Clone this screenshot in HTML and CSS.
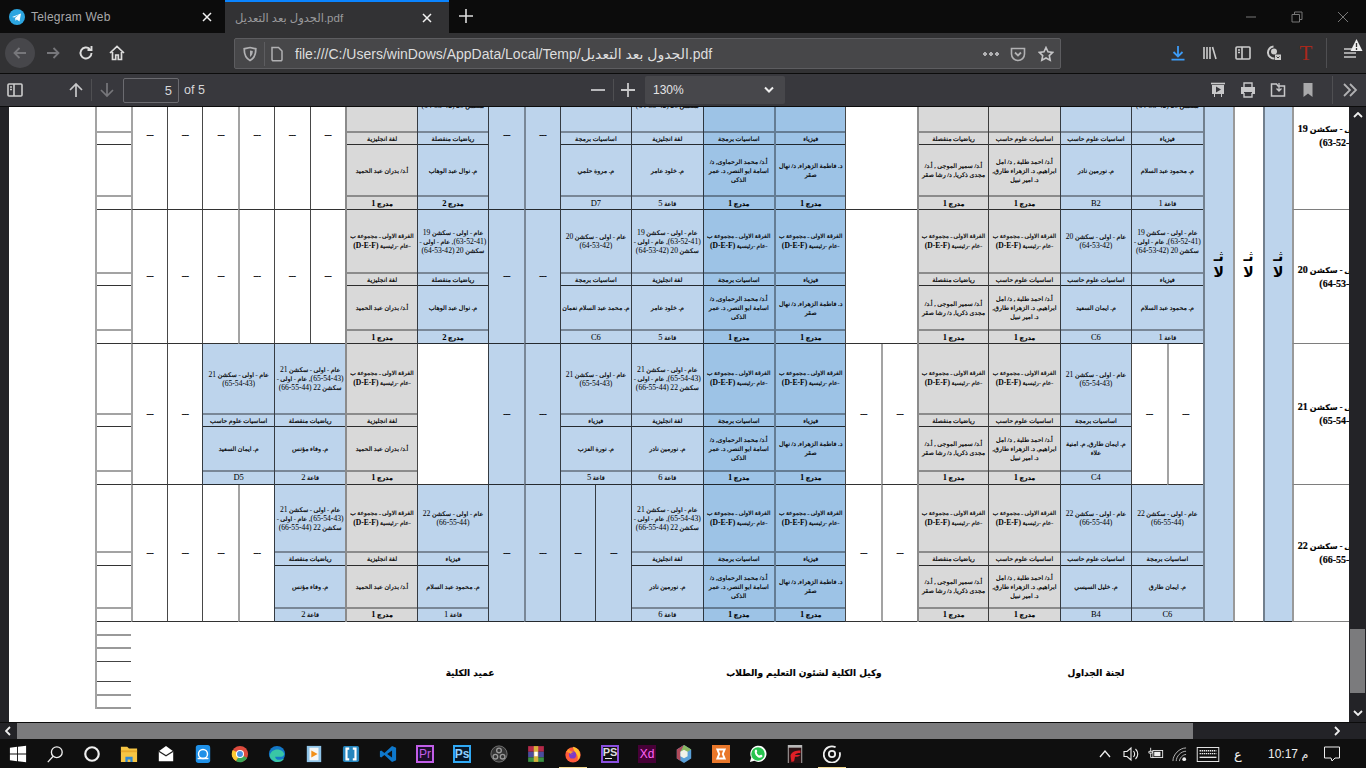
FILE: index.html
```html
<!DOCTYPE html>
<html lang="ar">
<head>
<meta charset="utf-8">
<title>Telegram Web</title>
<link rel="stylesheet" href="styles.css">
</head>
<body>
<svg class="defs" width="0" height="0" aria-hidden="true">
  <symbol id="x" viewBox="0 0 12 12"><path d="M2 2l8 8M10 2l-8 8" fill="none" stroke="currentColor" stroke-width="1.5"/></symbol>
  <symbol id="bar" viewBox="0 0 18 18"><path d="M3 3h12a1 1 0 0 1 1 1v10a1 1 0 0 1-1 1H3a1 1 0 0 1-1-1V4a1 1 0 0 1 1-1zM8 3v12M4 6h2M4 8.500h2" fill="none" stroke="currentColor" stroke-width="1.600"/></symbol>
</svg>

<header class="tabs">
  <div class="tab">
    <svg class="ticon" viewBox="0 0 16 16"><circle cx="8" cy="8" r="8" fill="#2ca5e0"/><path d="M3 8l9-3.600-1.500 8-2.700-2-1.300 1.300-.4-2.700 4-3.500-5 3z" fill="#fff"/></svg>
    <span class="tname">Telegram Web</span>
    <svg class="tx"><use href="#x"/></svg>
  </div>
  <div class="tab on">
    <span class="tname">الجدول بعد التعديل.pdf</span>
    <svg class="tx"><use href="#x"/></svg>
  </div>
  <svg class="plus" viewBox="0 0 14 14"><path d="M7 0v14M0 7h14" stroke="#ddd" stroke-width="1.600"/></svg>
  <div class="winbtns">
    <svg viewBox="0 0 12 12"><path d="M1 6h10" stroke="#777" stroke-width="1"/></svg>
    <svg viewBox="0 0 12 12"><path d="M3.500 3V1h7.500v7.500H8.500M1 3.500h7.500V11H1z" fill="none" stroke="#777"/></svg>
    <svg viewBox="0 0 12 12"><path d="M1 1l10 10M11 1L1 11" stroke="#777"/></svg>
  </div>
</header>

<nav class="bar">
  <div class="round"><svg viewBox="0 0 16 16"><path d="M14 8H2.500M7.500 3l-5 5 5 5" fill="none" stroke="#77777b" stroke-width="1.800"/></svg></div>
  <svg class="nv fwd" viewBox="0 0 16 16"><path d="M2 8h11.500M8.500 3l5 5-5 5" fill="none" stroke="#77777b" stroke-width="1.800"/></svg>
  <svg class="nv" viewBox="0 0 16 16"><path d="M13.500 8a5.500 5.500 0 1 1-1.700-4M13.500 1v4h-4" fill="none" stroke="#ddd" stroke-width="1.900"/></svg>
  <svg class="nv" viewBox="0 0 16 16"><path d="M1 8l7-6.500L15 8M3.500 7v7.500h3.200V10h2.600v4.500h3.200V7" fill="none" stroke="#ddd" stroke-width="1.700"/></svg>
  <div class="url">
    <svg class="ui shield" viewBox="0 0 16 16"><path d="M8 1.500l5.800 1.300c0 6-1.800 9.700-5.800 11.700C4 12.500 2.200 8.800 2.200 2.800z" fill="none" stroke="#b1b1b3" stroke-width="1.700"/><path d="M8 4.500l2.800.6c0 2.700-.9 4.600-2.800 5.800z" fill="#b1b1b3"/></svg>
    <span class="sep s4"></span>
    <svg class="ui file" viewBox="0 0 16 16"><path d="M3 1.500h6.500l3.500 3.500v8.500a1.200 1.200 0 0 1-1.200 1.200H4.200A1.200 1.200 0 0 1 3 13.500z" fill="none" stroke="#b1b1b3" stroke-width="1.500"/></svg>
    <span class="addr">file:///C:/Users/winDows/AppData/Local/Temp/الجدول بعد التعديل.pdf</span>
    <span class="dots"></span>
    <svg class="ui" viewBox="0 0 16 16"><path d="M1.500 2.500h13v5.500a6.500 6.500 0 0 1-13 0z" fill="none" stroke="#b1b1b3" stroke-width="1.600"/><path d="M5 6.500l3 3 3-3" fill="none" stroke="#b1b1b3" stroke-width="1.800"/></svg>
    <svg class="ui star" viewBox="0 0 16 16"><path d="M8 1.500l2 4.300 4.700.6-3.400 3.200.9 4.700L8 12l-4.200 2.300.9-4.700L1.300 6.400l4.700-.6z" fill="none" stroke="#c4c4c6" stroke-width="1.600"/></svg>
  </div>
  <div class="tools">
    <svg viewBox="0 0 16 16"><path d="M8 1v10M3.500 7L8 11.500 12.500 7M1.500 14.700h13" fill="none" stroke="#3d9bf5" stroke-width="1.800"/></svg>
    <svg viewBox="0 0 16 16"><path d="M2 2v12M5 2v12M8 2v12M10.500 2l3.500 12" fill="none" stroke="#ccc" stroke-width="1.600"/></svg>
    <svg class="sb"><use href="#bar"/></svg>
    <svg viewBox="0 0 16 16"><path d="M7.500 1.500a6 6 0 1 0 1 12" fill="none" stroke="#ccc" stroke-width="2"/><circle cx="8" cy="6.500" r="3" fill="#ccc"/><rect x="9" y="9.500" width="6" height="5.500" fill="#ccc"/><path d="M10.500 11.500l1.500 1.500 1.500-1.500" fill="none" stroke="#333" stroke-width="1"/></svg>
    <span class="redt">T</span>
    <span class="sep"></span>
    <span class="burger"><svg viewBox="0 0 14 12"><path d="M1 2h12M1 6h12M1 10h12" stroke="#ccc" stroke-width="1.500"/></svg><svg class="warn" viewBox="0 0 12 12"><path d="M6 0l6 12H0z" fill="#eee"/><path d="M6 4v4M6 9v2" stroke="#333" stroke-width="1.300"/></svg></span>
  </div>
</nav>

<div class="pdfbar">
  <svg class="pi sb"><use href="#bar"/></svg>
  <svg class="pi up" viewBox="0 0 16 16"><path d="M8 15V2M2 8l6-6 6 6" fill="none" stroke="#c8c8ca" stroke-width="1.700"/></svg>
  <span class="sep s1"></span>
  <svg class="pi down" viewBox="0 0 16 16"><path d="M8 1v13M2 8l6 6 6-6" fill="none" stroke="#77777b" stroke-width="1.700"/></svg>
  <span class="page">5</span>
  <span class="ofn">of 5</span>
  <div class="zoom">
    <svg class="pi" viewBox="0 0 16 16"><path d="M1 8h14" stroke="#c8c8ca" stroke-width="1.800"/></svg>
    <span class="sep s2"></span>
    <svg class="pi" viewBox="0 0 16 16"><path d="M1 8h14M8 1v14" stroke="#c8c8ca" stroke-width="1.800"/></svg>
    <div class="select"><span>130%</span><svg viewBox="0 0 10 8"><path d="M1 1.500l4 4 4-4" fill="none" stroke="#eee" stroke-width="2"/></svg></div>
  </div>
  <div class="pright">
    <svg viewBox="0 0 16 16"><path d="M1 1.500h14" stroke="#c8c8ca" stroke-width="1.600"/><path d="M2 3h12v9H2z" fill="#c8c8ca"/><path d="M6 4.500l5 3-5 3z" fill="#38383d"/><path d="M4.500 12v3M11.500 12v3" stroke="#c8c8ca"/></svg>
    <svg viewBox="0 0 16 16"><path d="M4 5V1h8v4M4 11v4h8v-4" fill="none" stroke="#c8c8ca" stroke-width="1.400"/><path d="M1 5h14v7h-3v-2H4v2H1z" fill="#c8c8ca"/></svg>
    <svg viewBox="0 0 16 16"><path d="M1.500 2h5l1.500 2h6.500v10h-13z" fill="none" stroke="#c8c8ca" stroke-width="1.500"/><path d="M9 1v8M6.500 6.500L9 9l2.500-2.500" fill="none" stroke="#c8c8ca" stroke-width="1.300"/></svg>
    <svg viewBox="0 0 16 16"><path d="M3.500 1h9v14L8 11.500 3.500 15z" fill="#a9a9ab"/></svg>
    <span class="sep s3"></span>
    <svg viewBox="0 0 16 16"><path d="M2 2l6 6-6 6M8 2l6 6-6 6" fill="none" stroke="#b1b1b3" stroke-width="1.800"/></svg>
  </div>
</div>

<main class="viewer">
  <div class="gutter"></div>
  <div class="paper">
    <div class="sheet">

      <section class="session r1">
        <div class="slot edge hv"><i></i><i></i><i></i><i></i></div>
        <div class="dash hv">---</div><div class="dash">---</div><div class="dash">---</div><div class="dash hv">---</div><div class="dash">---</div><div class="dash">---</div>
        <div class="slot gray hv"><p>الفرقة الاولى ـ مجموعة ب<br><b>-عام -رئيسية <em>(D-E-F)</em></b></p><p>لغة انجليزية</p><p>أ.د/ بدران عبد الحميد</p><p class="hall">مدرج <em>1</em></p></div>
        <div class="slot blue"><p>عام - اولى - سكشن <em>19</em> <em>(41-52-63),</em> عام - اولى - سكشن <em>20</em> <em>(42-53-64)</em></p><p>رياضيات منفصلة</p><p>م. نوال عبد الوهاب</p><p class="hall">مدرج <em>2</em></p></div>
        <div class="dash blue">---</div><div class="dash blue hv">---</div>
        <div class="slot blue"><p>عام - اولى - سكشن <em>20</em> <em>(42-53-64)</em></p><p>اساسيات برمجة</p><p>م. مروة حلمي</p><p class="room"><em>D7</em></p></div>
        <div class="slot blue"><p>عام - اولى - سكشن <em>19</em> <em>(41-52-63),</em> عام - اولى - سكشن <em>20</em> <em>(42-53-64)</em></p><p>لغة انجليزية</p><p>م. خلود عامر</p><p class="room">قاعة <em>5</em></p></div>
        <div class="slot deep"><p>الفرقة الاولى ـ مجموعة ب<br><b>-عام -رئيسية <em>(D-E-F)</em></b></p><p>اساسيات برمجة</p><p>أ.د/ محمد الرحماوى, د/ اسامة ابو النصر, د. عمر الذكى</p><p class="hall">مدرج <em>1</em></p></div>
        <div class="slot deep hv"><p>الفرقة الاولى ـ مجموعة ب<br><b>-عام -رئيسية <em>(D-E-F)</em></b></p><p>فيزياء</p><p>د. فاطمة الزهراء, د/ نهال صقر</p><p class="hall">مدرج <em>1</em></p></div>
        <div class="blank"></div>
        <div class="slot gray hv"><p>الفرقة الاولى ـ مجموعة ب<br><b>-عام -رئيسية <em>(D-E-F)</em></b></p><p>رياضيات منفصلة</p><p>أ.د/ سمير الموجى , أ.د/ مجدى ذكريا, د/ رشا صقر</p><p class="hall">مدرج <em>1</em></p></div>
        <div class="slot gray"><p>الفرقة الاولى ـ مجموعة ب<br><b>-عام -رئيسية <em>(D-E-F)</em></b></p><p>اساسيات علوم حاسب</p><p>أ.د/ احمد طلبة , د/ امل ابراهيم, د. الزهراء طارق, د. امير نبيل</p><p class="hall">مدرج <em>1</em></p></div>
        <div class="slot blue"><p>عام - اولى - سكشن <em>20</em> <em>(42-53-64)</em></p><p>اساسيات علوم حاسب</p><p>م. نورمين نادر</p><p class="room"><em>B2</em></p></div>
        <div class="slot blue"><p>عام - اولى - سكشن <em>19</em> <em>(41-52-63),</em> عام - اولى - سكشن <em>20</em> <em>(42-53-64)</em></p><p>فيزياء</p><p>م. محمود عبد السلام</p><p class="room">قاعة <em>1</em></p></div>
      </section>
      <div class="band b1 tint"><span>ثـ<br>لا</span></div>
      <div class="band b2"><span>ثـ<br>لا</span></div>
      <div class="band b3 tint"><span>ثـ<br>لا</span></div>
      <div class="rowhead r1" dir="rtl"><p>عام - اولى - سكشن <em>19</em> <em>(41-52-63)</em></p></div>

      <section class="session r2">
        <div class="slot edge hv"><i></i><i></i><i></i><i></i></div>
        <div class="dash hv">---</div><div class="dash">---</div><div class="dash">---</div><div class="dash hv">---</div><div class="dash">---</div><div class="dash">---</div>
        <div class="slot gray hv"><p>الفرقة الاولى ـ مجموعة ب<br><b>-عام -رئيسية <em>(D-E-F)</em></b></p><p>لغة انجليزية</p><p>أ.د/ بدران عبد الحميد</p><p class="hall">مدرج <em>1</em></p></div>
        <div class="slot blue"><p>عام - اولى - سكشن <em>19</em> <em>(41-52-63),</em> عام - اولى - سكشن <em>20</em> <em>(42-53-64)</em></p><p>رياضيات منفصلة</p><p>م. نوال عبد الوهاب</p><p class="hall">مدرج <em>2</em></p></div>
        <div class="dash blue">---</div><div class="dash blue hv">---</div>
        <div class="slot blue"><p>عام - اولى - سكشن <em>20</em> <em>(42-53-64)</em></p><p>اساسيات برمجة</p><p>م. محمد عبد السلام نعمان</p><p class="room"><em>C6</em></p></div>
        <div class="slot blue"><p>عام - اولى - سكشن <em>19</em> <em>(41-52-63),</em> عام - اولى - سكشن <em>20</em> <em>(42-53-64)</em></p><p>لغة انجليزية</p><p>م. خلود عامر</p><p class="room">قاعة <em>5</em></p></div>
        <div class="slot deep"><p>الفرقة الاولى ـ مجموعة ب<br><b>-عام -رئيسية <em>(D-E-F)</em></b></p><p>اساسيات برمجة</p><p>أ.د/ محمد الرحماوى, د/ اسامة ابو النصر, د. عمر الذكى</p><p class="hall">مدرج <em>1</em></p></div>
        <div class="slot deep hv"><p>الفرقة الاولى ـ مجموعة ب<br><b>-عام -رئيسية <em>(D-E-F)</em></b></p><p>فيزياء</p><p>د. فاطمة الزهراء, د/ نهال صقر</p><p class="hall">مدرج <em>1</em></p></div>
        <div class="blank"></div>
        <div class="slot gray hv"><p>الفرقة الاولى ـ مجموعة ب<br><b>-عام -رئيسية <em>(D-E-F)</em></b></p><p>رياضيات منفصلة</p><p>أ.د/ سمير الموجى , أ.د/ مجدى ذكريا, د/ رشا صقر</p><p class="hall">مدرج <em>1</em></p></div>
        <div class="slot gray"><p>الفرقة الاولى ـ مجموعة ب<br><b>-عام -رئيسية <em>(D-E-F)</em></b></p><p>اساسيات علوم حاسب</p><p>أ.د/ احمد طلبة , د/ امل ابراهيم, د. الزهراء طارق, د. امير نبيل</p><p class="hall">مدرج <em>1</em></p></div>
        <div class="slot blue"><p>عام - اولى - سكشن <em>20</em> <em>(42-53-64)</em></p><p>اساسيات علوم حاسب</p><p>م. ايمان السعيد</p><p class="room"><em>C6</em></p></div>
        <div class="slot blue"><p>عام - اولى - سكشن <em>19</em> <em>(41-52-63),</em> عام - اولى - سكشن <em>20</em> <em>(42-53-64)</em></p><p>فيزياء</p><p>م. محمود عبد السلام</p><p class="room">قاعة <em>1</em></p></div>
      </section>
      <div class="rowhead r2" dir="rtl"><p>عام - اولى - سكشن <em>20</em> <em>(42-53-64)</em></p></div>

      <section class="session r3">
        <div class="slot edge hv"><i></i><i></i><i></i><i></i></div>
        <div class="dash hv">---</div><div class="dash">---</div>
        <div class="slot blue"><p>عام - اولى - سكشن <em>21</em> <em>(43-54-65)</em></p><p>اساسيات علوم حاسب</p><p>م. ايمان السعيد</p><p class="room"><em>D5</em></p></div>
        <div class="slot blue"><p>عام - اولى - سكشن <em>21</em> <em>(43-54-65),</em> عام - اولى - سكشن <em>22</em> <em>(44-55-66)</em></p><p>رياضيات منفصلة</p><p>م. وفاء مؤنس</p><p class="room">قاعة <em>2</em></p></div>
        <div class="slot gray hv"><p>الفرقة الاولى ـ مجموعة ب<br><b>-عام -رئيسية <em>(D-E-F)</em></b></p><p>لغة انجليزية</p><p>أ.د/ بدران عبد الحميد</p><p class="hall">مدرج <em>1</em></p></div>
        <div class="blank"></div>
        <div class="dash blue">---</div><div class="dash blue hv">---</div>
        <div class="slot blue"><p>عام - اولى - سكشن <em>21</em> <em>(43-54-65)</em></p><p>فيزياء</p><p>م. نورة العزب</p><p class="room">قاعة <em>5</em></p></div>
        <div class="slot blue"><p>عام - اولى - سكشن <em>21</em> <em>(43-54-65),</em> عام - اولى - سكشن <em>22</em> <em>(44-55-66)</em></p><p>لغة انجليزية</p><p>م. نورمين نادر</p><p class="room">قاعة <em>6</em></p></div>
        <div class="slot deep"><p>الفرقة الاولى ـ مجموعة ب<br><b>-عام -رئيسية <em>(D-E-F)</em></b></p><p>اساسيات برمجة</p><p>أ.د/ محمد الرحماوى, د/ اسامة ابو النصر, د. عمر الذكى</p><p class="hall">مدرج <em>1</em></p></div>
        <div class="slot deep hv"><p>الفرقة الاولى ـ مجموعة ب<br><b>-عام -رئيسية <em>(D-E-F)</em></b></p><p>فيزياء</p><p>د. فاطمة الزهراء, د/ نهال صقر</p><p class="hall">مدرج <em>1</em></p></div>
        <div class="dash">---</div><div class="dash hv">---</div>
        <div class="slot gray hv"><p>الفرقة الاولى ـ مجموعة ب<br><b>-عام -رئيسية <em>(D-E-F)</em></b></p><p>رياضيات منفصلة</p><p>أ.د/ سمير الموجى , أ.د/ مجدى ذكريا, د/ رشا صقر</p><p class="hall">مدرج <em>1</em></p></div>
        <div class="slot gray"><p>الفرقة الاولى ـ مجموعة ب<br><b>-عام -رئيسية <em>(D-E-F)</em></b></p><p>اساسيات علوم حاسب</p><p>أ.د/ احمد طلبة , د/ امل ابراهيم, د. الزهراء طارق, د. امير نبيل</p><p class="hall">مدرج <em>1</em></p></div>
        <div class="slot blue"><p>عام - اولى - سكشن <em>21</em> <em>(43-54-65)</em></p><p>اساسيات برمجة</p><p>م. ايمان طارق, م. امنية علاء</p><p class="room"><em>C4</em></p></div>
        <div class="dash">---</div><div class="dash hv">---</div>
      </section>
      <div class="rowhead r3" dir="rtl"><p>عام - اولى - سكشن <em>21</em> <em>(43-54-65)</em></p></div>

      <section class="session r4">
        <div class="slot edge hv"><i></i><i></i><i></i><i></i></div>
        <div class="dash hv">---</div><div class="dash">---</div><div class="dash">---</div><div class="dash hv">---</div>
        <div class="slot blue"><p>عام - اولى - سكشن <em>21</em> <em>(43-54-65),</em> عام - اولى - سكشن <em>22</em> <em>(44-55-66)</em></p><p>رياضيات منفصلة</p><p>م. وفاء مؤنس</p><p class="room">قاعة <em>2</em></p></div>
        <div class="slot gray hv"><p>الفرقة الاولى ـ مجموعة ب<br><b>-عام -رئيسية <em>(D-E-F)</em></b></p><p>لغة انجليزية</p><p>أ.د/ بدران عبد الحميد</p><p class="hall">مدرج <em>1</em></p></div>
        <div class="slot blue"><p>عام - اولى - سكشن <em>22</em> <em>(44-55-66)</em></p><p>فيزياء</p><p>م. محمود عبد السلام</p><p class="room">قاعة <em>1</em></p></div>
        <div class="dash blue">---</div><div class="dash blue hv">---</div><div class="dash blue">---</div><div class="dash blue">---</div>
        <div class="slot blue"><p>عام - اولى - سكشن <em>21</em> <em>(43-54-65),</em> عام - اولى - سكشن <em>22</em> <em>(44-55-66)</em></p><p>لغة انجليزية</p><p>م. نورمين نادر</p><p class="room">قاعة <em>6</em></p></div>
        <div class="slot deep"><p>الفرقة الاولى ـ مجموعة ب<br><b>-عام -رئيسية <em>(D-E-F)</em></b></p><p>اساسيات برمجة</p><p>أ.د/ محمد الرحماوى, د/ اسامة ابو النصر, د. عمر الذكى</p><p class="hall">مدرج <em>1</em></p></div>
        <div class="slot deep hv"><p>الفرقة الاولى ـ مجموعة ب<br><b>-عام -رئيسية <em>(D-E-F)</em></b></p><p>فيزياء</p><p>د. فاطمة الزهراء, د/ نهال صقر</p><p class="hall">مدرج <em>1</em></p></div>
        <div class="dash">---</div><div class="dash hv">---</div>
        <div class="slot gray hv"><p>الفرقة الاولى ـ مجموعة ب<br><b>-عام -رئيسية <em>(D-E-F)</em></b></p><p>رياضيات منفصلة</p><p>أ.د/ سمير الموجى , أ.د/ مجدى ذكريا, د/ رشا صقر</p><p class="hall">مدرج <em>1</em></p></div>
        <div class="slot gray"><p>الفرقة الاولى ـ مجموعة ب<br><b>-عام -رئيسية <em>(D-E-F)</em></b></p><p>اساسيات علوم حاسب</p><p>أ.د/ احمد طلبة , د/ امل ابراهيم, د. الزهراء طارق, د. امير نبيل</p><p class="hall">مدرج <em>1</em></p></div>
        <div class="slot blue"><p>عام - اولى - سكشن <em>22</em> <em>(44-55-66)</em></p><p>اساسيات علوم حاسب</p><p>م. خليل السيسي</p><p class="room"><em>B4</em></p></div>
        <div class="slot blue"><p>عام - اولى - سكشن <em>22</em> <em>(44-55-66)</em></p><p>اساسيات برمجة</p><p>م. ايمان طارق</p><p class="room"><em>C6</em></p></div>
      </section>
      <div class="rowhead r4" dir="rtl"><p>عام - اولى - سكشن <em>22</em> <em>(44-55-66)</em></p></div>
    </div>

    <footer class="signs">
      <div class="ticks"><i></i><i></i><i></i><i></i><i></i><i></i></div>
      <b class="sig dean" dir="rtl">عميد الكلية</b>
      <b class="sig vice" dir="rtl">وكيل الكلية لشئون التعليم والطلاب</b>
      <b class="sig cttee" dir="rtl">لجنة الجداول</b>
    </footer>
  </div>
  <aside class="vscroll">
    <svg viewBox="0 0 10 6"><path d="M1 5l4-4 4 4" fill="none" stroke="#eee" stroke-width="1.800"/></svg>
    <span class="vthumb"></span>
    <svg viewBox="0 0 10 6"><path d="M1 1l4 4 4-4" fill="none" stroke="#eee" stroke-width="1.800"/></svg>
  </aside>
</main>

<div class="hscroll">
  <svg viewBox="0 0 6 10"><path d="M5 1L1 5l4 4" fill="none" stroke="#eee" stroke-width="1.800"/></svg>
  <span class="hthumb"></span>
  <svg viewBox="0 0 6 10"><path d="M1 1l4 4-4 4" fill="none" stroke="#eee" stroke-width="1.800"/></svg>
</div>

<footer class="task">
  <svg class="ic" viewBox="0 0 20 20"><path d="M1 3l8-1v7.500H1zM10 2l9-1.300v8.800h-9zM1 10.500h8V18l-8-1zM10 10.500h9v8.800L10 18z" fill="#fff"/></svg>
  <svg class="ic" viewBox="0 0 20 20"><circle cx="12" cy="8" r="6" fill="none" stroke="#eee" stroke-width="1.500"/><path d="M8 12.500L2 19" stroke="#eee" stroke-width="1.500"/></svg>
  <svg class="ic" viewBox="0 0 20 20"><circle cx="10" cy="10" r="7.500" fill="none" stroke="#eee" stroke-width="2.400"/></svg>
  <svg class="ic" viewBox="0 0 20 20"><path d="M1 2h7l2 2h9v15H1z" fill="#f6c544"/><path d="M1 6h18v2H1z" fill="#e8a92c"/><path d="M6 19v-6h8v6h-2.500v-3h-3v3z" fill="#2d89d6"/></svg>
  <svg class="ic" viewBox="0 0 20 20"><path d="M2 7l8-6 8 6v11H2z" fill="#fff"/><path d="M2 7l8 5 8-5" fill="none" stroke="#222" stroke-width="1.500"/></svg>
  <svg class="ic" viewBox="0 0 20 20"><rect x="2" y="0" width="16" height="20" rx="3" fill="#1e90e8"/><circle cx="10" cy="10" r="5" fill="none" stroke="#fff" stroke-width="1.600"/><path d="M4 15h12" stroke="#fff" stroke-width="1.600"/></svg>
  <svg class="ic" viewBox="0 0 20 20"><circle cx="10" cy="10" r="9" fill="#dd4b3e"/><path d="M10 10L18 14.500A9 9 0 0 1 5.500 17.800z" fill="#3aa757"/><path d="M10 10L5.500 17.800A9 9 0 0 1 2 5.500z" fill="#fcc934"/><circle cx="10" cy="10" r="4.500" fill="#fff"/><circle cx="10" cy="10" r="3.300" fill="#4a90e2"/></svg>
  <svg class="ic" viewBox="0 0 20 20"><circle cx="10" cy="10" r="9" fill="#1478c8"/><path d="M2 12c1-7 9-9 14-5 3 2.500 2 6-1 6H8c0 3 4 5 10 2-2 4-8 5-11 3-4-2-5-4-5-6z" fill="#39c6a5"/></svg>
  <svg class="ic" viewBox="0 0 20 20"><rect x="2" y="1" width="16" height="18" fill="#8fc4e8"/><rect x="5" y="3" width="10" height="14" fill="#f6f6f6"/><path d="M7 6l7 4-7 4z" fill="#f39019"/></svg>
  <svg class="ic" viewBox="0 0 20 20"><rect x="1" y="1" width="18" height="18" rx="2" fill="#2585bd"/><path d="M8 4H5v12h3M12 4h3v12h-3" fill="none" stroke="#fff" stroke-width="2.400"/></svg>
  <svg class="ic" viewBox="0 0 20 20"><path d="M14.500 1L19 3v14l-4.500 2L6 11l-3.500 3L1 13V7l1.500-1L6 9z" fill="#0e78cc"/><path d="M14.500 6L9 10l5.500 4z" fill="#111"/></svg>
  <span class="app pr">Pr</span>
  <span class="app ps">Ps</span>
  <svg class="ic" viewBox="0 0 20 20"><circle cx="10" cy="10" r="9" fill="#333" stroke="#777"/><circle cx="10" cy="6" r="2.600" fill="none" stroke="#999" stroke-width="1.500"/><circle cx="6" cy="13" r="2.600" fill="none" stroke="#999" stroke-width="1.500"/><circle cx="14" cy="13" r="2.600" fill="none" stroke="#999" stroke-width="1.500"/></svg>
  <svg class="ic" viewBox="0 0 16 16"><path d="M1 1h14v5H1z" fill="#b52a4a"/><path d="M1 6h14v5H1z" fill="#4b4d9e"/><path d="M1 11h14v4H1z" fill="#3b9143"/><path d="M6 1h4v14H6z" fill="#d9b13b"/><rect x="6.500" y="6" width="3" height="4" fill="#fff"/></svg>
  <svg class="ic fire" viewBox="0 0 20 20"><circle cx="10" cy="11" r="8.500" fill="#ff5a3c"/><path d="M10 2c5 1 8 5 8 9 0 3-2 5-3 6 1-3 0-6-2-8-1-2-3-4-3-7z" fill="#ffc02e"/><circle cx="9.500" cy="11" r="4" fill="#7c3bc7"/><path d="M2 7c2 0 2-2 4-3-1 3 3 3 5 4-4 0-4 3-1 3" fill="#ff9a2e"/></svg>
  <span class="app phps">PS<u></u></span>
  <span class="app xd">Xd</span>
  <svg class="ic" viewBox="0 0 20 20"><path d="M10 0l8 5v10l-8 5-8-5V5z" fill="#5aa0d8"/><path d="M10 0L2 5v10l4 2.500V8z" fill="#b04a5a"/><path d="M10 0l8 5-8 5-4-2z" fill="#8ab860"/><path d="M6 7.500l4-2.300 4 2.300v5l-4 2.300-4-2.300z" fill="#f2f2e8"/></svg>
  <svg class="ic" viewBox="0 0 20 20"><rect width="20" height="20" fill="#e9772a"/><path d="M6 5h8l-2 5 2 5H6l2-5z" fill="none" stroke="#fff" stroke-width="2.200"/></svg>
  <svg class="ic" viewBox="0 0 20 20"><path d="M1 19l1.500-5A9 9 0 1 1 6 17.600z" fill="#fff"/><circle cx="10" cy="10" r="7.500" fill="#27c44f"/><path d="M6.500 6c1-1.500 2-1 2.500.5s-1 1.500 0 3 2 2.500 3 2 1.500-1 2.500 0 .5 2-1 2.500c-4 1-8-4-7-8z" fill="#fff"/></svg>
  <svg class="ic" viewBox="0 0 20 20"><rect x="2" y="0" width="16" height="20" fill="#b8b8b8"/><rect x="3" y="3" width="14" height="17" fill="#2b1416"/><path d="M5 12c1-5 6-6 11-6v3c-3 0-5 .5-6 2 2 0 4 .5 6 0-3 3-5 2-6 2l-1 5-3 1z" fill="#e01f26"/></svg>
  <svg class="ic" viewBox="0 0 20 20"><path d="M14 2.500A9 9 0 1 0 18.500 8" fill="none" stroke="#eee" stroke-width="2"/><circle cx="10" cy="10" r="3.500" fill="none" stroke="#eee" stroke-width="2"/></svg>
  <span class="run r-a"></span><span class="run r-b"></span>
  <div class="tray">
    <svg class="t1" viewBox="0 0 12 8"><path d="M1 7l5-6 5 6" fill="none" stroke="#eee" stroke-width="1.300"/></svg>
    <svg class="t2" viewBox="0 0 16 16"><path d="M1 5.500h3L8 2v12L4 10.500H1zM10.500 5c1.500 2 1.500 4 0 6M12.500 3c3 3 3 7 0 10" fill="none" stroke="#eee" stroke-width="1.100"/></svg>
    <svg class="t3" viewBox="0 0 18 16"><rect x="5.500" y="4" width="11" height="8" fill="none" stroke="#eee"/><rect x="7" y="5.500" width="7" height="5" fill="#eee"/><path d="M3 1v4M1 5h4v2H1zM3 7v5h3" fill="none" stroke="#eee"/></svg>
    <svg class="t4" viewBox="0 0 16 16"><path d="M1 15C1 8 8 1 15 1M4.500 15c0-5 5-10.500 10.500-10.500M8 15c0-3 3.500-7 7-7" fill="none" stroke="#bbb"/><circle cx="13" cy="13" r="2" fill="#eee"/></svg>
    <svg class="t5" viewBox="0 0 24 16"><rect x=".5" y=".5" width="23" height="15" fill="none" stroke="#eee"/><path d="M3 4h18M3 7h18" stroke="#eee" stroke-width="1.400" stroke-dasharray="1.500 .7"/><path d="M3 11h18" stroke="#eee" stroke-width="1.400"/></svg>
    <span class="lang">ع</span>
    <span class="clock">10:17 <small>م</small></span>
    <svg class="t6" viewBox="0 0 16 16"><path d="M.5 1h15v11H11l-3 3-1-3H.5z" fill="none" stroke="#eee"/></svg>
  </div>
</footer>
</body>
</html>
```
FILE: styles.css
```css
*{box-sizing:border-box}
html,body{margin:0;height:768px;overflow:hidden;background:#0f0f0f}
body{display:flex;flex-direction:column;width:1366px;font-family:"Liberation Sans","DejaVu Sans",sans-serif}
.defs{position:absolute}
p{margin:0}
em{font-style:normal;white-space:nowrap}

/* tabs */
.tabs{height:33px;background:#0c0c0c;display:flex;align-items:stretch;flex:none}
.tab{width:224px;display:flex;align-items:center;padding-left:9px;color:#a8a8aa;font-size:12px}
.tab:first-child{width:225px}
.ticon{width:16px;height:16px;margin-right:6px}
.tname{flex:1;letter-spacing:.2px}
.tab.on{background:#323234;border-top:2px solid #0a84ff;padding-left:10px}
.tab.on .tname{flex:none;width:186px;font-size:11.500px;letter-spacing:0;color:#9a9a9c}
.tx{width:12px;height:12px;color:#f2f2f2;margin-right:12px}
.plus{width:14px;height:14px;margin:9px 0 0 10px}
.winbtns{margin-left:auto;display:flex;align-items:center;gap:34px;padding-right:17px}
.winbtns svg{width:12px;height:12px;display:block}

/* toolbar */
.bar{height:41px;flex:none;background:#323234;border-bottom:1px solid #0c0c0c;display:flex;align-items:center;padding-left:5px;position:relative}
.round{width:30px;height:30px;border-radius:50%;background:#47474b;display:flex;align-items:center;justify-content:center;margin-right:10px}
.round svg{width:16px;height:16px}
.nv{width:16px;height:16px;margin-right:15px}
.nv.fwd{margin-right:17px}
.url{position:absolute;left:234px;top:5px;width:827px;height:31px;background:#474749;border:1px solid #5d5d60;border-radius:2px;display:flex;align-items:center;color:#ddd}
.ui{width:16px;height:16px;flex:none}
.shield{margin:0 6px 0 7px}
.s4.sep{height:24px;background:#5d5d60}
.file{margin-left:4px}
.addr{font-size:14px;margin-left:10px;white-space:nowrap;color:#dedede}
.dots{margin-left:auto;width:16px;height:4px;background:radial-gradient(circle at 2px 2px,#b1b1b3 1.800px,transparent 2px) 0 0/6px 4px repeat-x;margin-right:11px}
.star{margin:0 6px 0 12px}
.tools{position:absolute;right:0;top:0;height:40px;width:196px;display:flex;align-items:center}
.tools svg{width:16px;height:16px;flex:none;margin-right:16px}
.sb{width:18px;height:18px;color:#ccc}
.tools .sb{width:18px;height:18px;margin-right:14px}
.redt{font:21px "Liberation Serif",serif;color:#a8281c;width:16px;margin-right:12px;text-align:center}
.sep{display:block;width:1px;background:#4f4f52;height:30px;flex:none}
.burger{position:relative;margin-left:16px;width:14px;height:14px}
.tools .burger svg{width:14px;height:12px;display:block;margin:1px 0 0}
.tools .burger .warn{position:absolute;left:7px;top:-7px;width:13px;height:12px;margin:0}

/* pdf toolbar */
.pdfbar{height:33px;flex:none;background:#38383d;border-bottom:1px solid #0c0c0c;display:flex;align-items:center;padding-left:6px;position:relative;color:#d6d6d8;font-size:13px}
.pi{width:16px;height:16px;flex:none}
.pdfbar>.sb{width:18px;height:18px;margin-right:44px}
.s1{height:22px;margin:0 7px}
.down{margin-right:8px}
.page{width:56px;height:25px;border:1px solid #6b6b70;border-radius:2px;text-align:right;padding:4px 6px 0 0;margin-right:5px;font-size:13px}
.ofn{font-size:12.500px}
.zoom{position:absolute;left:590px;top:0;height:32px;display:flex;align-items:center}
.s2{height:22px;margin:0 6px 0 7px}
.select{margin-left:9px;width:140px;height:28px;background:#47474b;border-radius:2px;display:flex;align-items:center;justify-content:space-between;padding:0 11px 0 8px;font-size:12px;color:#e4e4e6}
.select svg{width:10px;height:8px}
.pright{position:absolute;right:8px;top:0;height:32px;display:flex;align-items:center;gap:14px}
.pright svg{width:16px;height:16px}
.s3{height:28px;margin:0 -5px 0 2px}

/* viewer */
.viewer{height:615px;flex:none;display:flex;background:#fff}
.gutter{width:9px;background:#232327;flex:none}
.paper{flex:1;overflow:hidden;padding-left:87px;min-width:0;background:#fff}
.sheet{display:grid;grid-template-columns:1108px 29.5px 30px 29.5px 96px;margin:-45px 0 0 -1px;color:#000;font:6.3px/9px "Liberation Serif","DejaVu Sans",serif;-webkit-text-stroke:.18px #000}
.r1{grid-row:1;--rows:71px 12px 52px 13px}
.r2{grid-row:2;--rows:64px 12px 45px 13px}
.r3{grid-row:3;--rows:71px 12px 44.500px 13.500px}
.r4{grid-row:4;--rows:68px 12.500px 43px 13.500px}
.session{grid-column:1;display:grid;grid-template-columns:36px repeat(30,35.733px);grid-template-rows:var(--rows);min-width:0}

.slot,.dash,.blank{border-left:1px solid rgba(0,0,0,.72);border-bottom:1px solid rgba(0,0,0,.8);grid-row:1/5;min-width:0}
.hv{border-left:2px solid rgba(0,0,0,.36)}
.slot{grid-column:span 2;display:grid;grid-template-rows:subgrid;border-bottom:0}
.slot>p{align-content:center;text-align:center;direction:rtl;overflow:hidden;padding:0 1px}
.slot>p:has(br){white-space:nowrap;font-size:5.900px;padding:0}
.slot>p:nth-child(1),.edge i:nth-child(1),.slot>p:nth-child(3),.edge i:nth-child(3){border-bottom:2px solid rgba(0,0,0,.36)}
.slot>p:nth-child(2),.edge i:nth-child(2),.slot>p:nth-child(4),.edge i:nth-child(4){border-bottom:1px solid rgba(0,0,0,.8)}
.slot em{font-size:7.600px;-webkit-text-stroke:0}
.slot b{font-weight:normal}
.slot b em{font-weight:bold;font-size:7.600px}
.slot .hall{font-weight:bold}
.slot .hall em{font-size:8.500px}
.slot .room em{font-size:8.500px}
.edge{grid-column:span 1}
.dash{display:flex;align-items:center;justify-content:center;font:bold 8px "Liberation Serif",serif;letter-spacing:-.4px}
.blank{grid-column:span 2}
.blue{background:#bdd4ec}
.deep{background:#9dc3e6}
.gray{background:#d9d9d9}
.band{grid-row:1/5;display:flex;align-items:center;justify-content:center;border-left:2px solid rgba(0,0,0,.4);padding-bottom:156px;border-bottom:1px solid rgba(0,0,0,.8);font:bold 14px/16px "DejaVu Sans",sans-serif;color:#000;text-align:center;-webkit-text-stroke:0}
.b1{grid-column:2}
.b2{grid-column:3}
.b3{grid-column:4}
.tint{background:#bdd4ec}
.rowhead{grid-column:5;align-content:center;text-align:center;border-left:2px solid rgba(0,0,0,.4);border-bottom:1px solid rgba(0,0,0,.5);font:bold 8px/13px "Liberation Serif","DejaVu Sans",serif;color:#000}
.rowhead em{font-size:10px}

/* signatures */
.signs{display:grid;grid-template-columns:36px 214px 248px 420px 164px;height:100px;align-items:start;margin-left:-1px}
.ticks{grid-column:1;width:36px;border-left:2px solid rgba(0,0,0,.36);display:flex;flex-direction:column}
.ticks i{display:block;border-bottom:2px solid rgba(0,0,0,.4)}
.ticks i:nth-child(1){height:14px}.ticks i:nth-child(2){height:13px}.ticks i:nth-child(3){height:13px;border-bottom:1px solid #444}
.ticks i:nth-child(4){height:20px;border-bottom:1px solid #444}.ticks i:nth-child(5){height:14px}.ticks i:nth-child(6){height:13px}
.sig{margin-top:45px;padding-right:0;padding-left:2px;text-align:center;font:bold 9px/12px "DejaVu Sans",sans-serif;color:#000;-webkit-text-stroke:.15px #000;white-space:nowrap}
.dean{grid-column:3}
.vice{grid-column:4}
.cttee{grid-column:5}

/* scrollbars */
.vscroll{width:17px;flex:none;background:#232327;display:flex;flex-direction:column;align-items:center;padding:5px 0 6px}
.vscroll svg{width:10px;height:6px;flex:none}
.vthumb{width:15px;height:64px;background:#7b7b7d;margin-top:auto;margin-bottom:17px}
.hscroll{height:17px;flex:none;background:#232327;border-top:1px solid #0c0c0c;display:flex;align-items:center;padding-left:5px}
.hscroll svg{width:6px;height:10px;flex:none}
.hthumb{width:1176px;height:16px;background:#7b7b7d;margin:0 141px 0 6px}

/* taskbar */
.task{height:30px;flex:none;background:#0f0f0f;display:flex;align-items:center;padding-left:9px;position:relative}
.ic,.app{width:18px;height:18px;margin-right:19px;flex:none}
.app{display:flex;align-items:center;justify-content:center;font:12px "Liberation Sans",sans-serif;position:relative}
.pr{border:2px solid #c25ee8;color:#c25ee8;background:#1d0f2c}
.ps{border:2px solid #2fa9f5;color:#8ed0ff;background:#07182b;font-weight:bold}
.phps{border:2px solid #8a4fe0;color:#ddd;background:#111;font-weight:bold;font-size:11px;align-items:flex-start;line-height:11px}
.phps u{position:absolute;left:2px;bottom:2px;width:7px;height:1px;background:#eee}
.xd{background:#470137;color:#ff61f6}
.run{position:absolute;bottom:0;height:2px;background:#f1d88f;width:28px}
.r-a{left:559px}
.r-b{left:818px}
.tray{position:absolute;left:1099px;top:0;height:30px;width:267px;display:flex;align-items:center;color:#eee}
.tray svg{flex:none}
.t1{width:12px;height:8px;margin-right:12px}
.t2{width:16px;height:16px;margin-right:9px}
.t3{width:16px;height:16px;margin-right:8px}
.t4{width:15px;height:15px;margin-right:9px}
.t5{width:24px;height:15px;margin-right:14px}
.lang{font:13px "DejaVu Sans",sans-serif;width:8px;margin-right:26px}
.clock{font:12px "Liberation Sans","DejaVu Sans",sans-serif;width:46px}
.clock small{font-size:11px}
.t6{width:16px;height:16px;margin-left:10px}
```
